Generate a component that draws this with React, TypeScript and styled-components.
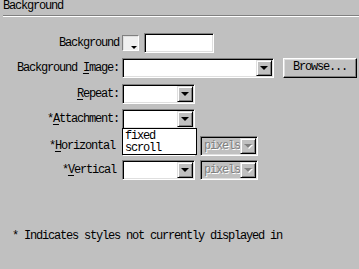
import styled, {createGlobalStyle} from "styled-components";

const GlobalStyle = createGlobalStyle`
    html, body {
        margin: 0;
        padding: 0;
        background: #c0c0c0;
    }
    body {
        font-family: "Liberation Mono", monospace;
        font-size: 12px;
        letter-spacing: -1.2px;
        color: #000;
    }
`

const Panel = styled.div`
    width: 359px;
    height: 269px;
    background: #c0c0c0;
    overflow: hidden;
`

const Title = styled.div`
    height: 15px;
    line-height: 13px;
    padding-left: 3px;
`

const Rule = styled.div`
    margin-left: 3px;
    border-top: 1px solid #808080;
    border-bottom: 1px solid #ffffff;
`

const Form = styled.div`
    display: grid;
    grid-template-columns: 122px 1fr;
    grid-template-rows: 25px 26px 25px 27px 24px 20px;
    padding-top: 16px;
`

const Label = styled.div<{ $pad?: number }>`
    line-height: 20px;
    text-align: right;
    padding-right: ${p => p.$pad ?? 3}px;
    white-space: pre;
`

const Key = styled.span`
    text-decoration: underline;
    text-underline-offset: 2px;
`

const Controls = styled.div<{ $gap?: number }>`
    display: flex;
    align-items: flex-start;
    gap: ${p => p.$gap ?? 5}px;
    position: relative;
`

const Sunken = styled.div<{ $w: number, $disabled?: boolean }>`
    box-sizing: border-box;
    width: ${p => p.$w}px;
    height: 20px;
    border: 1px solid;
    border-color: #808080 #ffffff #ffffff #808080;
    box-shadow: inset 1px 1px 0 #000000, inset -1px -1px 0 #dfdfdf;
    background: ${p => p.$disabled ? "#c0c0c0" : "#ffffff"};
    color: ${p => p.$disabled ? "#808080" : "#000"};
    text-shadow: ${p => p.$disabled ? "1px 1px 0 #ffffff" : "none"};
    padding: 1px;
    display: flex;
    align-items: stretch;
`

const Value = styled.div`
    flex: 1;
    line-height: 17px;
    padding-left: 2px;
    overflow: hidden;
`

const DropButton = styled.div`
    box-sizing: border-box;
    width: 16px;
    height: 16px;
    background: #c0c0c0;
    border: 1px solid;
    border-color: #dfdfdf #000000 #000000 #dfdfdf;
    box-shadow: inset 1px 1px 0 #ffffff, inset -1px -1px 0 #808080;
    display: flex;
    align-items: center;
    justify-content: center;
`

const Arrow = styled.div<{ $disabled?: boolean }>`
    width: 0;
    height: 0;
    border-left: 4px solid transparent;
    border-right: 4px solid transparent;
    border-top: 4px solid ${p => p.$disabled ? "#808080" : "#000"};
    filter: ${p => p.$disabled ? "drop-shadow(1px 1px 0 #ffffff)" : "none"};
`

const Swatch = styled.div`
    box-sizing: border-box;
    width: 17px;
    height: 16px;
    margin-top: 2px;
    border: 1px solid;
    border-color: #808080 #ffffff #ffffff #808080;
    box-shadow: inset 1px 1px 0 #dfdfdf;
    background: #f0f0f0;
    position: relative;
`

const SwatchArrow = styled.div`
    position: absolute;
    right: 1px;
    bottom: 1px;
    width: 0;
    height: 0;
    border-left: 3px solid transparent;
    border-right: 3px solid transparent;
    border-top: 3px solid #000;
`

const Button = styled.div`
    box-sizing: border-box;
    width: 74px;
    height: 20px;
    background: #c0c0c0;
    border: 1px solid;
    border-color: #ffffff #000000 #000000 #ffffff;
    box-shadow: inset -1px -1px 0 #808080, inset 1px 1px 0 #dfdfdf;
    line-height: 17px;
    text-align: center;
`

const ListBox = styled.div`
    position: absolute;
    left: 0;
    top: 19px;
    box-sizing: border-box;
    width: 75px;
    height: 27px;
    background: #ffffff;
    border: 1px solid #000;
    padding: 1px 2px;
    line-height: 12px;
    z-index: 2;
`

const Footer = styled.div`
    margin-top: 50px;
    padding-left: 12px;
    line-height: 12px;
`

type SelectProps = {
    width: number
    value?: string
    disabled?: boolean
}

const Select = ({width, value, disabled}: SelectProps) => (
    <Sunken $w={width} $disabled={disabled}>
        <Value>{value}</Value>
        <DropButton>
            <Arrow $disabled={disabled}/>
        </DropButton>
    </Sunken>
)

export default function App() {
    return <Panel>
        <GlobalStyle/>
        <Title>Background</Title>
        <Rule/>
        <Form>
            <Label>Background</Label>
            <Controls>
                <Swatch><SwatchArrow/></Swatch>
                <Sunken $w={70}/>
            </Controls>

            <Label>Background <Key>I</Key>mage:</Label>
            <Controls $gap={9}>
                <Select width={152}/>
                <Button>Browse...</Button>
            </Controls>

            <Label><Key>R</Key>epeat:</Label>
            <Controls>
                <Select width={73}/>
            </Controls>

            <Label>*<Key>A</Key>ttachment:</Label>
            <Controls>
                <Select width={73}/>
                <ListBox>
                    <div>fixed</div>
                    <div>scroll</div>
                </ListBox>
            </Controls>

            <Label $pad={7}>*<Key>H</Key>orizontal</Label>
            <Controls>
                <Select width={73}/>
                <Select width={58} value="pixels" disabled/>
            </Controls>

            <Label $pad={6}>*<Key>V</Key>ertical</Label>
            <Controls>
                <Select width={73}/>
                <Select width={58} value="pixels" disabled/>
            </Controls>
        </Form>
        <Footer>* Indicates styles not currently displayed in</Footer>
    </Panel>
}
